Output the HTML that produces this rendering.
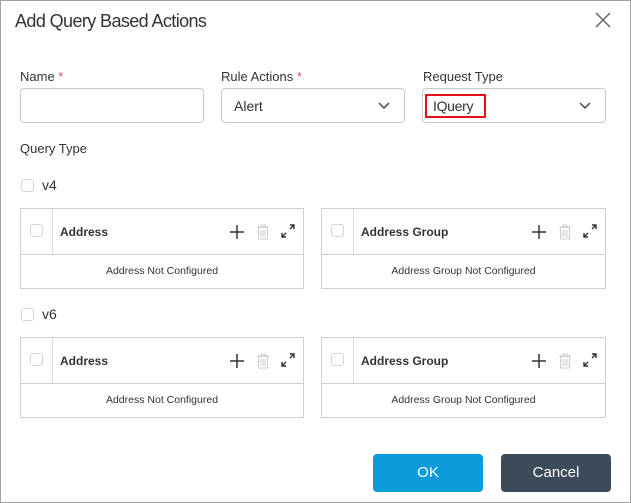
<!DOCTYPE html>
<html><head><style>
*{box-sizing:border-box;margin:0;padding:0}
body{width:631px;height:503px;font-family:"Liberation Sans",sans-serif;background:#fff;position:relative;overflow:hidden;color:#333}
.frame{position:absolute;left:0;top:0;width:631px;height:503px;border:1px solid #a0a0a0}
.a{position:absolute}
.lbl{font-size:13px;color:#333}
.req{color:#e8546b}
.inp{position:absolute;height:35px;border:1px solid #c8c8c8;border-radius:4px;font-size:14px;padding:9px 12px;color:#333}
.chev{position:absolute;right:14px;top:13px}
.cb{position:absolute;width:13px;height:13px;border:1px solid #d5d5d5;border-radius:3px;background:#fff}
.tbl{position:absolute;width:284px;height:81px;border:1px solid #cfcfcf}
.hd{position:absolute;left:0;top:0;right:0;height:46px;border-bottom:1px solid #cfcfcf}
.hd .sep{position:absolute;left:31px;top:0;bottom:0;border-left:1px solid #dcdcdc}
.hd .t{position:absolute;left:39px;top:16px;font-size:12px;font-weight:bold;color:#333}
.bd{position:absolute;left:0;right:0;top:46px;bottom:0;font-size:10.5px;text-align:center;line-height:33px;color:#333}
.btn{position:absolute;top:454px;height:38px;border-radius:4px;color:#fff;font-size:15px;text-align:center;line-height:38px}
</style></head><body>
<div class="frame"></div>
<div class="a" style="left:15px;top:11px;font-size:18px;color:#333;letter-spacing:-0.6px">Add Query Based Actions</div>
<svg class="a" style="left:595px;top:12px" width="16" height="16"><path d="M1 1L15 15M15 1L1 15" stroke="#666" stroke-width="1.5"/></svg>

<div class="a lbl" style="left:20px;top:69px">Name <span class="req">*</span></div>
<div class="a lbl" style="left:221px;top:69px">Rule Actions <span class="req">*</span></div>
<div class="a lbl" style="left:423px;top:69px">Request Type</div>
<div class="inp" style="left:20px;top:88px;width:184px"></div>
<div class="inp" style="left:221px;top:88px;width:184px">Alert<svg class="chev" width="12" height="8"><path d="M1 1L6 6L11 1" stroke="#444" stroke-width="1.5" fill="none"/></svg></div>
<div class="inp" style="left:422px;top:88px;width:184px"><svg class="chev" width="12" height="8"><path d="M1 1L6 6L11 1" stroke="#444" stroke-width="1.5" fill="none"/></svg></div>
<div class="a" style="left:425px;top:94px;width:61px;height:24px;border:2px solid #e0101c;font-size:14px;padding:2px 0 0 6px;color:#333;letter-spacing:-0.3px">IQuery</div>

<div class="a lbl" style="left:20px;top:141px">Query Type</div>
<div class="cb" style="left:21px;top:179px"></div>
<div class="a" style="left:42px;top:177px;font-size:14px">v4</div>

<div class="tbl" style="left:20px;top:208px"><div class="hd"><div class="cb" style="left:9px;top:15px"></div><div class="sep"></div><div class="t">Address</div>
<svg class="a" style="left:209px;top:16px" width="14" height="14"><path d="M7 0V14M0 7H14" stroke="#333" stroke-width="1.5"/></svg>
<svg class="a" style="left:235px;top:15px" width="14" height="16"><path d="M1 3H13M5 3V1H9V3M2.5 3.5H11.5V15H2.5Z" stroke="#ccc" fill="none"/><path d="M5 6V13M7 6V13M9 6V13" stroke="#ccc"/></svg>
<svg class="a" style="left:260px;top:15px" width="14" height="14"><path d="M9 1H13V5M13 1L9 5M1 9V13H5M1 13L5 9" stroke="#333" stroke-width="1.4" fill="none"/></svg>
</div><div class="bd">Address Not Configured</div></div>

<div class="tbl" style="left:321px;top:208px;width:285px"><div class="hd"><div class="cb" style="left:9px;top:15px"></div><div class="sep"></div><div class="t">Address Group</div>
<svg class="a" style="left:210px;top:16px" width="14" height="14"><path d="M7 0V14M0 7H14" stroke="#333" stroke-width="1.5"/></svg>
<svg class="a" style="left:236px;top:15px" width="14" height="16"><path d="M1 3H13M5 3V1H9V3M2.5 3.5H11.5V15H2.5Z" stroke="#ccc" fill="none"/><path d="M5 6V13M7 6V13M9 6V13" stroke="#ccc"/></svg>
<svg class="a" style="left:261px;top:15px" width="14" height="14"><path d="M9 1H13V5M13 1L9 5M1 9V13H5M1 13L5 9" stroke="#333" stroke-width="1.4" fill="none"/></svg>
</div><div class="bd">Address Group Not Configured</div></div>

<div class="cb" style="left:21px;top:308px"></div>
<div class="a" style="left:42px;top:306px;font-size:14px">v6</div>

<div class="tbl" style="left:20px;top:337px"><div class="hd"><div class="cb" style="left:9px;top:15px"></div><div class="sep"></div><div class="t">Address</div>
<svg class="a" style="left:209px;top:16px" width="14" height="14"><path d="M7 0V14M0 7H14" stroke="#333" stroke-width="1.5"/></svg>
<svg class="a" style="left:235px;top:15px" width="14" height="16"><path d="M1 3H13M5 3V1H9V3M2.5 3.5H11.5V15H2.5Z" stroke="#ccc" fill="none"/><path d="M5 6V13M7 6V13M9 6V13" stroke="#ccc"/></svg>
<svg class="a" style="left:260px;top:15px" width="14" height="14"><path d="M9 1H13V5M13 1L9 5M1 9V13H5M1 13L5 9" stroke="#333" stroke-width="1.4" fill="none"/></svg>
</div><div class="bd">Address Not Configured</div></div>

<div class="tbl" style="left:321px;top:337px;width:285px"><div class="hd"><div class="cb" style="left:9px;top:15px"></div><div class="sep"></div><div class="t">Address Group</div>
<svg class="a" style="left:210px;top:16px" width="14" height="14"><path d="M7 0V14M0 7H14" stroke="#333" stroke-width="1.5"/></svg>
<svg class="a" style="left:236px;top:15px" width="14" height="16"><path d="M1 3H13M5 3V1H9V3M2.5 3.5H11.5V15H2.5Z" stroke="#ccc" fill="none"/><path d="M5 6V13M7 6V13M9 6V13" stroke="#ccc"/></svg>
<svg class="a" style="left:261px;top:15px" width="14" height="14"><path d="M9 1H13V5M13 1L9 5M1 9V13H5M1 13L5 9" stroke="#333" stroke-width="1.4" fill="none"/></svg>
</div><div class="bd">Address Group Not Configured</div></div>

<div class="btn" style="left:373px;width:110px;background:#0a9bdb">OK</div>
<div class="btn" style="left:501px;width:110px;background:#3d4a5a">Cancel</div>
</body></html>
